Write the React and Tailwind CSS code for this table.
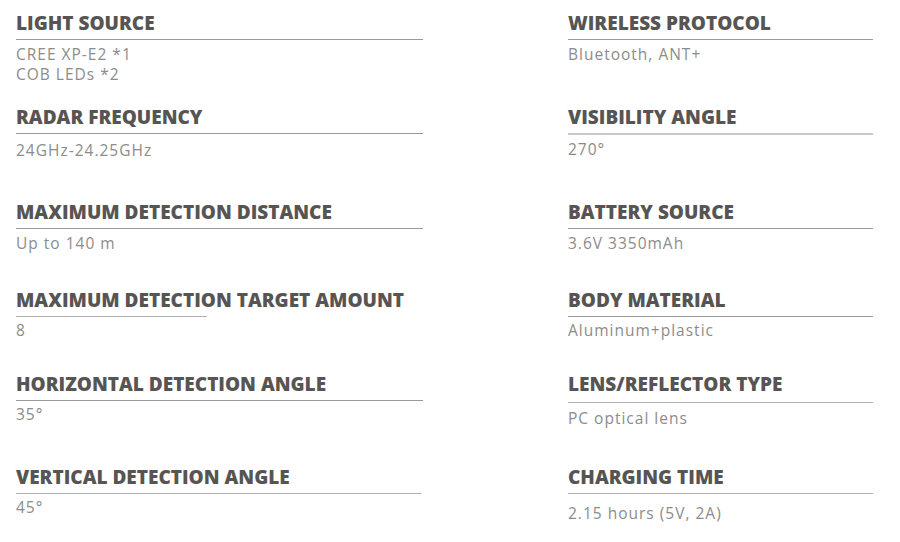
import React from "react";

const H = ({ children }) => (
  <div className="text-[19px] leading-[24px] font-extrabold text-[#575553] whitespace-nowrap">
    {children}
  </div>
);

function Cell({ title, values, lineW = "w-full", lineCls = "h-px bg-[#9a9a9a]", gapTop = "mt-[4px]", valTop = "pt-[4px]" }) {
  return (
    <div className="flex flex-col">
      <H>{title}</H>
      <div className={`${gapTop} ${lineW} ${lineCls}`} />
      <div className={`${valTop} text-[15.5px] leading-[20px] tracking-[1px] text-[#8c8c8c]`}>
        {values.map((v, i) => (
          <div key={i}>{v}</div>
        ))}
      </div>
    </div>
  );
}

export default function App() {
  return (
    <div
      className="w-[900px] h-[542px] bg-white overflow-hidden pt-[11px] pl-[16px]"
      style={{ fontFamily: '"Open Sans", "Liberation Sans", sans-serif' }}
    >
      <div className="grid grid-cols-[407px_305px] gap-x-[145px] grid-rows-[94px_95px_88px_84px_93px_77px]">
        <Cell title="LIGHT SOURCE" values={["CREE XP-E2 *1", "COB LEDs *2"]} />
        <Cell title="WIRELESS PROTOCOL" values={["Bluetooth, ANT+"]} />

        <Cell title="RADAR FREQUENCY" values={["24GHz-24.25GHz"]} valTop="pt-[6px]" />
        <Cell title="VISIBILITY ANGLE" values={["270°"]} lineCls="h-[2px] bg-[#c8c8c8]" valTop="pt-[4px]" />

        <Cell title="MAXIMUM DETECTION DISTANCE" values={["Up to 140 m"]} />
        <Cell title="BATTERY SOURCE" values={["3.6V 3350mAh"]} />

        <Cell title="MAXIMUM DETECTION TARGET AMOUNT" values={["8"]} lineW="w-[191px]" lineCls="h-px bg-[#b0b0b0]" valTop="pt-[3px]" />
        <Cell title="BODY MATERIAL" values={["Aluminum+plastic"]} valTop="pt-[3px]" />

        <Cell title="HORIZONTAL DETECTION ANGLE" values={["35°"]} valTop="pt-[3px]" />
        <Cell title="LENS/REFLECTOR TYPE" values={["PC optical lens"]} gapTop="mt-[6px]" lineCls="h-px bg-[#b0b0b0]" valTop="pt-[5px]" />

        <Cell title="VERTICAL DETECTION ANGLE" values={["45°"]} lineW="w-[405px]" lineCls="h-px bg-[#b0b0b0]" valTop="pt-[3px]" />
        <Cell title="CHARGING TIME" values={["2.15 hours (5V, 2A)"]} lineCls="h-px bg-[#b0b0b0]" valTop="pt-[9px]" />
      </div>
    </div>
  );
}
